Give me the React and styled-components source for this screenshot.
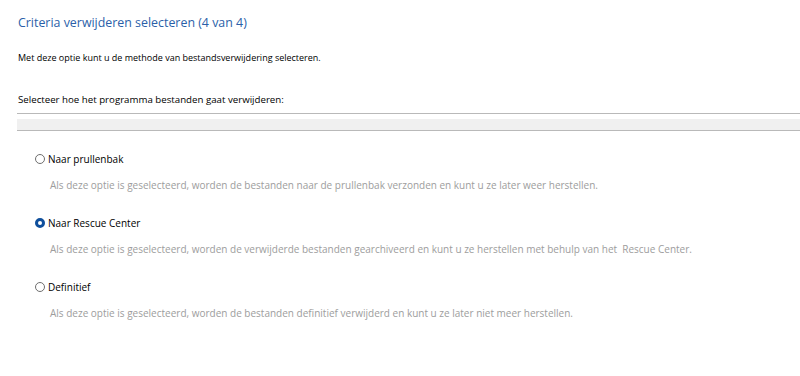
import React, { useState } from "react"
import styled, { createGlobalStyle } from "styled-components"

const options = [
  {
    id: "bin",
    label: "Naar prullenbak",
    text: "Als deze optie is geselecteerd, worden de bestanden naar de prullenbak verzonden en kunt u ze later weer herstellen.",
  },
  {
    id: "rescue",
    label: "Naar Rescue Center",
    text: "Als deze optie is geselecteerd, worden de verwijderde bestanden gearchiveerd en kunt u ze herstellen met behulp van het  Rescue Center.",
  },
  {
    id: "final",
    label: "Definitief",
    text: "Als deze optie is geselecteerd, worden de bestanden definitief verwijderd en kunt u ze later niet meer herstellen.",
  },
]

const App = () => {
  const [selected, setSelected] = useState("rescue")
  return (
    <>
      <GlobalStyle />
      <Page>
        <Title>Criteria verwijderen selecteren (4 van 4)</Title>
        <Intro>Met deze optie kunt u de methode van bestandsverwijdering selecteren.</Intro>
        <Prompt>Selecteer hoe het programma bestanden gaat verwijderen:</Prompt>
        <Divider>
          <Band />
        </Divider>
        <OptionList>
          {options.map((o) => (
            <Option key={o.id}>
              <RadioRow onClick={() => setSelected(o.id)}>
                <Radio $checked={selected === o.id} />
                <Label>{o.label}</Label>
              </RadioRow>
              <Description>{o.text}</Description>
            </Option>
          ))}
        </OptionList>
      </Page>
    </>
  )
}

export default App

const GlobalStyle = createGlobalStyle`
  html, body {
    margin: 0;
    padding: 0;
    background: #ffffff;
  }
  body {
    width: 800px;
    height: 376px;
    overflow: hidden;
    font-family: "Open Sans", "Noto Sans", sans-serif;
    color: #000;
  }
`

const Page = styled.div`
  display: flex;
  flex-direction: column;
  padding: 14px 0 0 17px;
`

const Title = styled.h1`
  margin: 0 0 0 1px;
  font-size: 12.4px;
  line-height: 18px;
  font-weight: 400;
  color: #2b5fa9;
`

const Intro = styled.p`
  margin: 20px 0 0 1px;
  font-size: 9px;
  line-height: 12px;
`

const Prompt = styled.p`
  margin: 30px 0 0 1px;
  font-size: 9.7px;
  line-height: 12px;
`

const Divider = styled.div`
  margin-top: 7px;
  border-top: 1px solid #b9b9b9;
  padding-top: 5px;
`

const Band = styled.div`
  height: 11px;
  background: #f0f0f0;
  border-bottom: 1px solid #b9b9b9;
`

const OptionList = styled.div`
  display: flex;
  flex-direction: column;
  gap: 24px;
  margin-top: 21px;
  padding-left: 18px;
`

const Option = styled.div`
  display: flex;
  flex-direction: column;
`

const RadioRow = styled.label`
  display: flex;
  align-items: center;
  gap: 3px;
  height: 14px;
  cursor: default;
`

const Radio = styled.span`
  box-sizing: border-box;
  width: 10px;
  height: 10px;
  border-radius: 50%;
  background: #fff;
  border: ${(p) => (p.$checked ? "3px solid #0f4f9c" : "1px solid #6e6e6e")};
`

const Label = styled.span`
  font-size: 10px;
  line-height: 14px;
  color: #000;
`

const Description = styled.p`
  margin: 12px 0 0 15px;
  font-size: 10px;
  line-height: 14px;
  color: #9d9d9d;
  white-space: pre;
`
